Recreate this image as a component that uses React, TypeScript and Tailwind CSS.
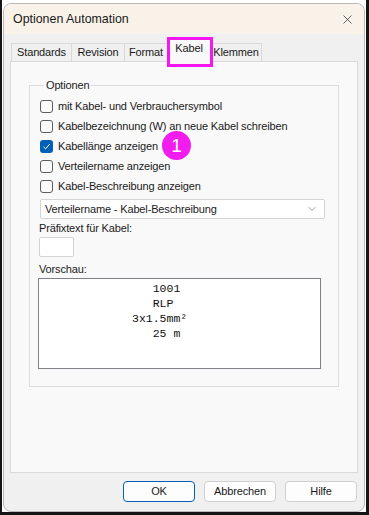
import { X, ChevronDown } from 'lucide-react';

const font = "font-['Liberation_Sans',Arial,sans-serif]";

interface CheckRow {
  label: string;
  checked?: boolean;
}

const rows: CheckRow[] = [
  { label: 'mit Kabel- und Verbrauchersymbol' },
  { label: 'Kabelbezeichnung (W) an neue Kabel schreiben' },
  { label: 'Kabellänge anzeigen', checked: true },
  { label: 'Verteilername anzeigen' },
  { label: 'Kabel-Beschreibung anzeigen' },
];

// widths read off the screenshot
const tabs = [
  { label: 'Standards', w: 'w-[61px]' },
  { label: 'Revision', w: 'w-[54px]' },
  { label: 'Format', w: 'w-[44px]' },
  { label: 'Kabel', w: 'w-[44px]' },
  { label: 'Klemmen', w: 'w-[52px]' },
];

function Checkbox({ checked }: { checked?: boolean }) {
  if (checked) {
    return (
      <span className="w-[13px] h-[13px] rounded-[3px] bg-[#005fb8] flex items-center justify-center shrink-0">
        <svg width="9" height="9" viewBox="0 0 9 9" fill="none">
          <path d="M1.5 4.8 L3.6 6.8 L7.6 2.2" stroke="#fff" strokeWidth="1" />
        </svg>
      </span>
    );
  }
  return <span className="w-[13px] h-[13px] rounded-[3px] border border-[#5c5c5c] bg-[#fbfbfb] shrink-0" />;
}

function App() {
  return (
    <div className={`w-[369px] h-[515px] bg-white flex pl-[1px] pt-[3px] border-l-[2px] border-r-[3px] border-b-[3px] border-[#151515] ${font} text-[11px] tracking-[-0.15px] text-black`}>
      {/* Dialog */}
      <div className="w-[362px] h-[509px] rounded-[8px] border border-[#b9b9b9] bg-[#f0f0f0] overflow-hidden flex flex-col">
        {/* Title bar */}
        <div className="h-[30px] bg-[#f9f2e9] flex items-center justify-between pl-[9px] pr-[9px] shrink-0">
          <span className="text-[12.4px] tracking-normal text-[#1a1a1a]">Optionen Automation</span>
          <X size={15} strokeWidth={1.1} className="text-[#222]" />
        </div>

        <div className="flex flex-col pl-[6px] pr-[6px]">
          {/* Tabs */}
          <div className="flex items-end h-[27px] pl-[1px]">
            {tabs.map((t, i) => {
              const active = t.label === 'Kabel';
              return (
                <div
                  key={t.label}
                  className={
                    active
                      ? `relative ${t.w} shrink-0 h-[23px] -ml-px bg-[#f9f9f9] border border-b-0 border-[#d9d9d9] flex justify-center pt-[3px] -mb-px z-10`
                      : `${t.w} shrink-0 h-[18px] ${i === 0 ? '' : '-ml-px'} bg-[#f0f0f0] border border-b-0 border-[#d9d9d9] flex items-center justify-center`
                  }
                >
                  <span className="leading-none text-[#1a1a1a]">{t.label}</span>
                  {active && (
                    <span className="absolute -left-[1px] -top-[3px] w-[46px] h-[30px] border-[3px] border-[#f516f0]" />
                  )}
                </div>
              );
            })}
          </div>

          {/* Tab panel */}
          <div className="h-[412px] bg-[#f9f9f9] border border-[#d9d9d9] pt-[18px] pl-[18px] pr-[18px]">
            <fieldset className="h-[307px] border border-[#dcdcdc] px-[10px] relative">
              <legend className="ml-[4px] px-[2px] leading-none text-[#1a1a1a]">Optionen</legend>

              <div className="flex flex-col pt-[5px]">
                {rows.map((r, i) => (
                  <div key={i} className="h-[20px] flex items-center gap-[5px] relative">
                    <Checkbox checked={r.checked} />
                    <span className="text-[#1a1a1a]">{r.label}</span>
                    {r.checked && (
                      <span className="absolute left-[122px] top-[-5px] w-[29px] h-[29px] rounded-full bg-[#f21cee] text-white text-[19px] flex items-center justify-center leading-none tracking-normal">
                        1
                      </span>
                    )}
                  </div>
                ))}
              </div>

              {/* Dropdown */}
              <div className="mt-[3px] h-[20px] w-[285px] bg-white border border-[#d4d4d4] rounded-[2px] flex items-center justify-between pl-[4px] pr-[6px]">
                <span className="text-[#1a1a1a]">Verteilername - Kabel-Beschreibung</span>
                <ChevronDown size={12} strokeWidth={1.1} className="text-[#444]" />
              </div>

              <div className="mt-[2px] -ml-[1px] h-[14px] flex items-center text-[#1a1a1a]">Präfixtext für Kabel:</div>
              <div className="mt-[2px] -ml-[1px] w-[35px] h-[20px] bg-white border border-[#d4d4d4] rounded-[2px]" />

              <div className="mt-[5px] -ml-[1px] h-[14px] flex items-center text-[#1a1a1a]">Vorschau:</div>
              <div className="mt-[2px] -ml-[2px] w-[283px] h-[91px] bg-white border border-[#7f8187] pt-[2px] pl-[93px]">
                <pre className="font-['Liberation_Mono','Courier_New',monospace] text-[11.5px] tracking-normal leading-[15px] text-[#111]">
                  {'   1001\n   RLP\n3x1.5mm²\n   25 m'}
                </pre>
              </div>
            </fieldset>
          </div>

          {/* Buttons */}
          <div className="flex justify-end gap-[9px] mt-[8px] pr-[1px]">
            <button className="w-[72px] h-[21px] rounded-[4px] bg-[#fdfdfd] border border-[#005fb8] text-[#1a1a1a] leading-none">
              OK
            </button>
            <button className="w-[72px] h-[21px] rounded-[4px] bg-[#fdfdfd] border border-[#d0d0d0] text-[#1a1a1a] leading-none">
              Abbrechen
            </button>
            <button className="w-[72px] h-[21px] rounded-[4px] bg-[#fdfdfd] border border-[#d0d0d0] text-[#1a1a1a] leading-none">
              Hilfe
            </button>
          </div>
        </div>
      </div>
    </div>
  );
}

export default App;
